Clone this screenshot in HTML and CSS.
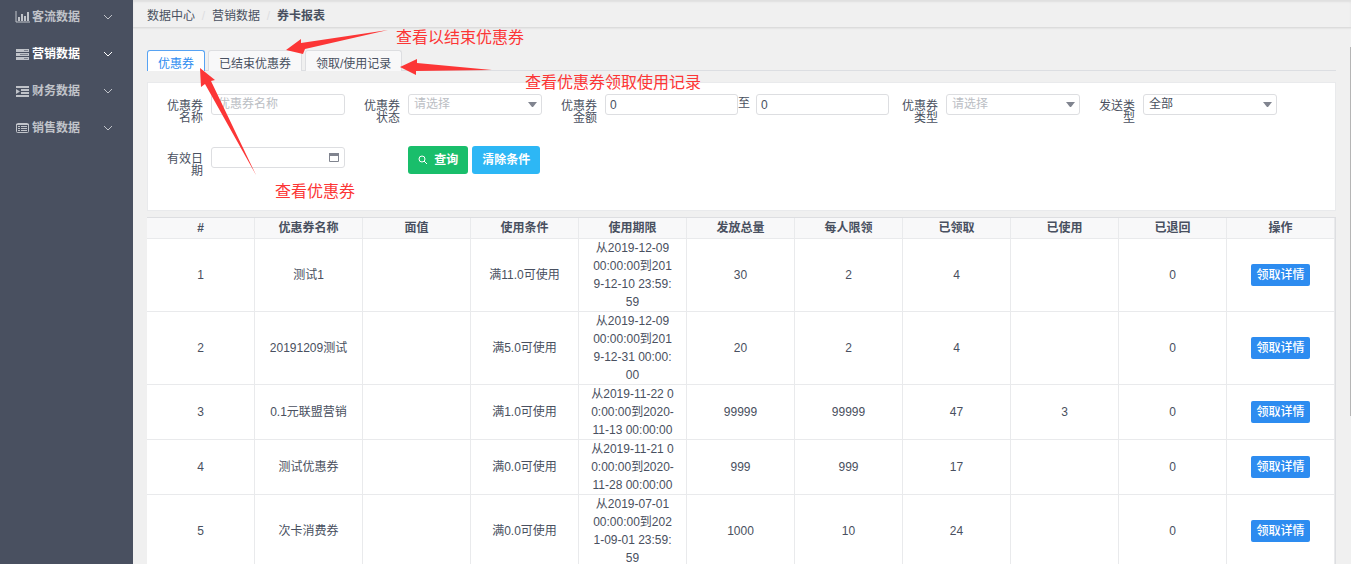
FILE: index.html
```html
<!DOCTYPE html>
<html lang="zh-CN">

<head>
    <meta charset="UTF-8">
    <meta name="viewport" content="width=device-width, initial-scale=1.0">
    <title>券卡报表</title>
    <link rel="stylesheet" href="styles.css">
</head>

<body>
    <div class="layout">
        <nav class="sidebar">
            <a class="menu-item" href="#">
                <svg class="menu-icon" viewBox="0 0 15 12">
                    <path d="M1 0v11h14" />
                    <path class="bars" d="M3 6h2v4H3zM6 3h2v7H6zM9 5h2v5H9zM12 1h2v9h-2z" />
                </svg>
                <span>客流数据</span>
                <svg class="arrow" viewBox="0 0 10 6"><path d="M1 1l4 4 4-4" /></svg>
            </a>
            <a class="menu-item active" href="#">
                <svg class="menu-icon" viewBox="0 0 15 12">
                    <path class="bars" d="M1 1h13v3H1zM1 5h13v3H1zM1 9h13v3H1z" />
                    <path class="cut" d="M9 2.5h4M5 6.5h8M9 10.5h4" />
                </svg>
                <span>营销数据</span>
                <svg class="arrow" viewBox="0 0 10 6"><path d="M1 1l4 4 4-4" /></svg>
            </a>
            <a class="menu-item" href="#">
                <svg class="menu-icon" viewBox="0 0 15 12">
                    <path class="bars" d="M1 1h13v2H1zM6 4h8v2H6zM6 7h8v2H6zM1 10h13v2H1zM1 4l4 2.5L1 9z" />
                </svg>
                <span>财务数据</span>
                <svg class="arrow" viewBox="0 0 10 6"><path d="M1 1l4 4 4-4" /></svg>
            </a>
            <a class="menu-item" href="#">
                <svg class="menu-icon" viewBox="0 0 15 12">
                    <rect x="1.5" y="1.5" width="12" height="9" rx="1" />
                    <path d="M1 2.5h13M3 4.5h2M6 4.5h6M3 6.5h2M6 6.5h6M3 8.5h2M6 8.5h6" />
                </svg>
                <span>销售数据</span>
                <svg class="arrow" viewBox="0 0 10 6"><path d="M1 1l4 4 4-4" /></svg>
            </a>
        </nav>

        <main class="main">
            <header class="breadcrumb">
                <a href="#">数据中心</a>
                <span class="sep">/</span>
                <a href="#">营销数据</a>
                <span class="sep">/</span>
                <span class="current">券卡报表</span>
            </header>

            <div class="content">
                <div class="tabs">
                    <button class="tab active" type="button">优惠券</button>
                    <button class="tab" type="button">已结束优惠券</button>
                    <button class="tab" type="button">领取/使用记录</button>
                </div>

                <form class="card">
                    <div class="form-item">
                        <label for="name">优惠券名称</label>
                        <input class="field" id="name" type="text" placeholder="优惠券名称">
                    </div>
                    <div class="form-item">
                        <label for="status">优惠券状态</label>
                        <select class="field empty" id="status">
                            <option>请选择</option>
                        </select>
                    </div>
                    <div class="form-item range">
                        <label for="min">优惠券金额</label>
                        <input class="field number" id="min" type="text" value="0">
                        <label class="to" for="max">至</label>
                        <input class="field number" id="max" type="text" value="0">
                    </div>
                    <div class="form-item">
                        <label for="type">优惠券类型</label>
                        <select class="field empty" id="type">
                            <option>请选择</option>
                        </select>
                    </div>
                    <div class="form-item">
                        <label for="send">发送类型</label>
                        <select class="field" id="send">
                            <option>全部</option>
                        </select>
                    </div>
                    <div class="form-item">
                        <label for="date">有效日期</label>
                        <input class="field date" id="date" type="text">
                    </div>
                    <div class="form-item buttons">
                        <button class="btn search" type="button">
                            <svg viewBox="0 0 10 10"><circle cx="4" cy="4" r="3" /><path d="M6 6l3 3" /></svg>
                            查询
                        </button>
                        <button class="btn clear" type="button">清除条件</button>
                    </div>
                </form>

                <table class="table">
                    <thead>
                        <tr>
                            <th>#</th>
                            <th>优惠券名称</th>
                            <th>面值</th>
                            <th>使用条件</th>
                            <th>使用期限</th>
                            <th>发放总量</th>
                            <th>每人限领</th>
                            <th>已领取</th>
                            <th>已使用</th>
                            <th>已退回</th>
                            <th>操作</th>
                        </tr>
                    </thead>
                    <tbody>
                        <tr>
                            <td>1</td>
                            <td>测试1</td>
                            <td></td>
                            <td>满11.0可使用</td>
                            <td>从2019-12-09 00:00:00到2019-12-10 23:59:59</td>
                            <td>30</td>
                            <td>2</td>
                            <td>4</td>
                            <td></td>
                            <td>0</td>
                            <td><button class="detail" type="button">领取详情</button></td>
                        </tr>
                        <tr>
                            <td>2</td>
                            <td>20191209测试</td>
                            <td></td>
                            <td>满5.0可使用</td>
                            <td>从2019-12-09 00:00:00到2019-12-31 00:00:00</td>
                            <td>20</td>
                            <td>2</td>
                            <td>4</td>
                            <td></td>
                            <td>0</td>
                            <td><button class="detail" type="button">领取详情</button></td>
                        </tr>
                        <tr>
                            <td>3</td>
                            <td>0.1元联盟营销</td>
                            <td></td>
                            <td>满1.0可使用</td>
                            <td>从2019-11-22 00:00:00到2020-11-13 00:00:00</td>
                            <td>99999</td>
                            <td>99999</td>
                            <td>47</td>
                            <td>3</td>
                            <td>0</td>
                            <td><button class="detail" type="button">领取详情</button></td>
                        </tr>
                        <tr>
                            <td>4</td>
                            <td>测试优惠券</td>
                            <td></td>
                            <td>满0.0可使用</td>
                            <td>从2019-11-21 00:00:00到2020-11-28 00:00:00</td>
                            <td>999</td>
                            <td>999</td>
                            <td>17</td>
                            <td></td>
                            <td>0</td>
                            <td><button class="detail" type="button">领取详情</button></td>
                        </tr>
                        <tr>
                            <td>5</td>
                            <td>次卡消费券</td>
                            <td></td>
                            <td>满0.0可使用</td>
                            <td>从2019-07-01 00:00:00到2021-09-01 23:59:59</td>
                            <td>1000</td>
                            <td>10</td>
                            <td>24</td>
                            <td></td>
                            <td>0</td>
                            <td><button class="detail" type="button">领取详情</button></td>
                        </tr>
                    </tbody>
                </table>
            </div>
            <div class="scrollbar"></div>
        </main>
    </div>

    <!-- red notes over the page -->
    <svg class="notes" width="760" height="220" viewBox="0 0 760 220">
        <path d="M286 50L301 39V43L388 30L305 49L303 54Z" />
        <path d="M400 67L417 59V63L492 70L416 71V75Z" />
        <path d="M200 68L215 80L211 81L256 175L205 84L201 87Z" />
        <text x="396" y="43">查看以结束优惠券</text>
        <text x="525" y="88">查看优惠券领取使用记录</text>
        <text x="275" y="197">查看优惠券</text>
    </svg>
</body>

</html>
```

FILE: styles.css
```css
* {
    box-sizing: border-box;
}

body {
    margin: 0;
    font-family: "Liberation Sans", "Noto Sans CJK SC", sans-serif;
    font-size: 12px;
    line-height: 18px;
    color: #495060;
    background-color: #f0f0f0;
}

a {
    color: inherit;
    text-decoration: none;
}

button,
input,
select {
    font: inherit;
    color: inherit;
}

.layout {
    display: flex;
    height: 100vh;
    overflow: hidden;
}

.sidebar {
    width: 133px;
    flex: none;
    background-color: #495060;
}

.menu-item {
    display: flex;
    align-items: center;
    height: 37px;
    padding: 0 20px 4px 15px;
    color: #c0c3c9;
    font-weight: bold;
}

.menu-item.active {
    color: #fff;
}

.menu-icon {
    width: 15px;
    height: 12px;
    margin-right: 2px;
    fill: none;
    stroke: #c0c3c9;
}

.menu-icon .bars {
    fill: #c0c3c9;
    stroke: none;
}

.menu-icon .cut {
    stroke: #7d828d;
}

.arrow {
    width: 10px;
    height: 6px;
    margin-left: auto;
    fill: none;
    stroke: currentColor;
}

.main {
    position: relative;
    flex: 1;
    min-width: 0;
    overflow: hidden;
}

.breadcrumb {
    display: flex;
    height: 28px;
    padding: 7px 14px 0;
    border-bottom: 1px solid #dcdcdc;
    box-shadow: inset 0 2px 2px #dfdfdf, 0 1px 1px #e6e6e6;
}

.sep {
    width: 17px;
    text-align: center;
    color: #dddee1;
}

.current {
    font-weight: bold;
}

.content {
    padding: 22px 15px 0 14px;
}

.tabs {
    display: flex;
    gap: 3px;
    height: 21px;
    margin-bottom: 11px;
    border-bottom: 1px solid #dcdee2;
}

.tab {
    height: 21px;
    padding: 4px 10px 0;
    border: 1px solid #dddee1;
    border-bottom: 0;
    border-radius: 3px 3px 0 0;
    background-color: #f8f8f9;
}

.tab.active {
    color: #2d8cf0;
    border-color: #57a3f3;
    background-color: #fff;
}

.card {
    display: flex;
    flex-wrap: wrap;
    gap: 24px 13px;
    margin-bottom: 6px;
    padding: 11px 18px 34px 19px;
    border: 1px solid #e9eaec;
    background-color: #fff;
}

.form-item {
    display: flex;
    align-items: flex-start;
    height: 29px;
    padding-right: 6px;
}

.form-item.range {
    padding-right: 0;
}

.form-item label {
    width: 44px;
    padding: 6px 8px 0 0;
    line-height: 12px;
    text-align: right;
}

.form-item .to {
    width: 18px;
    padding: 3px 6px 0 0;
}

.field {
    width: 134px;
    height: 21px;
    padding: 0 6px 2px;
    border: 1px solid #dddee1;
    border-radius: 3px;
    background-color: #fff;
    outline: none;
}

.field.number {
    width: 133px;
    padding: 0 4px;
}

.field::placeholder,
.field.empty {
    color: #bbbec4;
}

select.field {
    appearance: none;
    padding: 0 5px 2px;
    background: #fff url("data:image/svg+xml,%3Csvg xmlns='http://www.w3.org/2000/svg' width='9' height='6'%3E%3Cpath d='M0 0h9L5 5H4z' fill='%2380848f'/%3E%3C/svg%3E") no-repeat right 4px center;
}

.field.date {
    background: #fff url("data:image/svg+xml,%3Csvg xmlns='http://www.w3.org/2000/svg' width='10' height='9'%3E%3Cpath d='M.5 .5h9v8h-9z' fill='none' stroke='%2380848f'/%3E%3Cpath d='M0 0h10v3H0z' fill='%2380848f'/%3E%3C/svg%3E") no-repeat right 5px center;
}

.form-item.buttons {
    gap: 4px;
    padding-left: 44px;
    margin-top: -1px;
}

.btn {
    height: 28px;
    padding: 0 10px;
    border: 0;
    border-radius: 3px;
    color: #fff;
    font-weight: bold;
    cursor: pointer;
}

.btn svg {
    width: 10px;
    height: 10px;
    margin-right: 3px;
    fill: none;
    stroke: #fff;
    vertical-align: -1px;
}

.btn.search {
    background-color: #19be6b;
}

.btn.clear {
    background-color: #2db7f5;
}

.table {
    width: 100%;
    table-layout: fixed;
    border-collapse: separate;
    border-spacing: 0;
    border-top: 1px solid #dddee1;
    border-right: 1px solid #dddee1;
    background-color: #fff;
}

.table th,
.table td {
    padding: 0 12px;
    border-right: 1px solid #e9eaec;
    border-bottom: 1px solid #e9eaec;
    text-align: center;
    word-break: break-all;
}

.table th {
    height: 21px;
    background-color: #f8f8f9;
}

.detail {
    height: 22px;
    padding: 0 5px;
    border: 0;
    border-radius: 2px;
    color: #fff;
    font-weight: 500;
    background-color: #2d8cf0;
    cursor: pointer;
}

.scrollbar {
    position: absolute;
    top: 47px;
    right: 0;
    width: 1px;
    height: 369px;
    background-color: #b5b5b5;
}

.notes {
    position: absolute;
    top: 0;
    left: 0;
    fill: #fc3636;
    font-size: 16px;
    pointer-events: none;
}
```
